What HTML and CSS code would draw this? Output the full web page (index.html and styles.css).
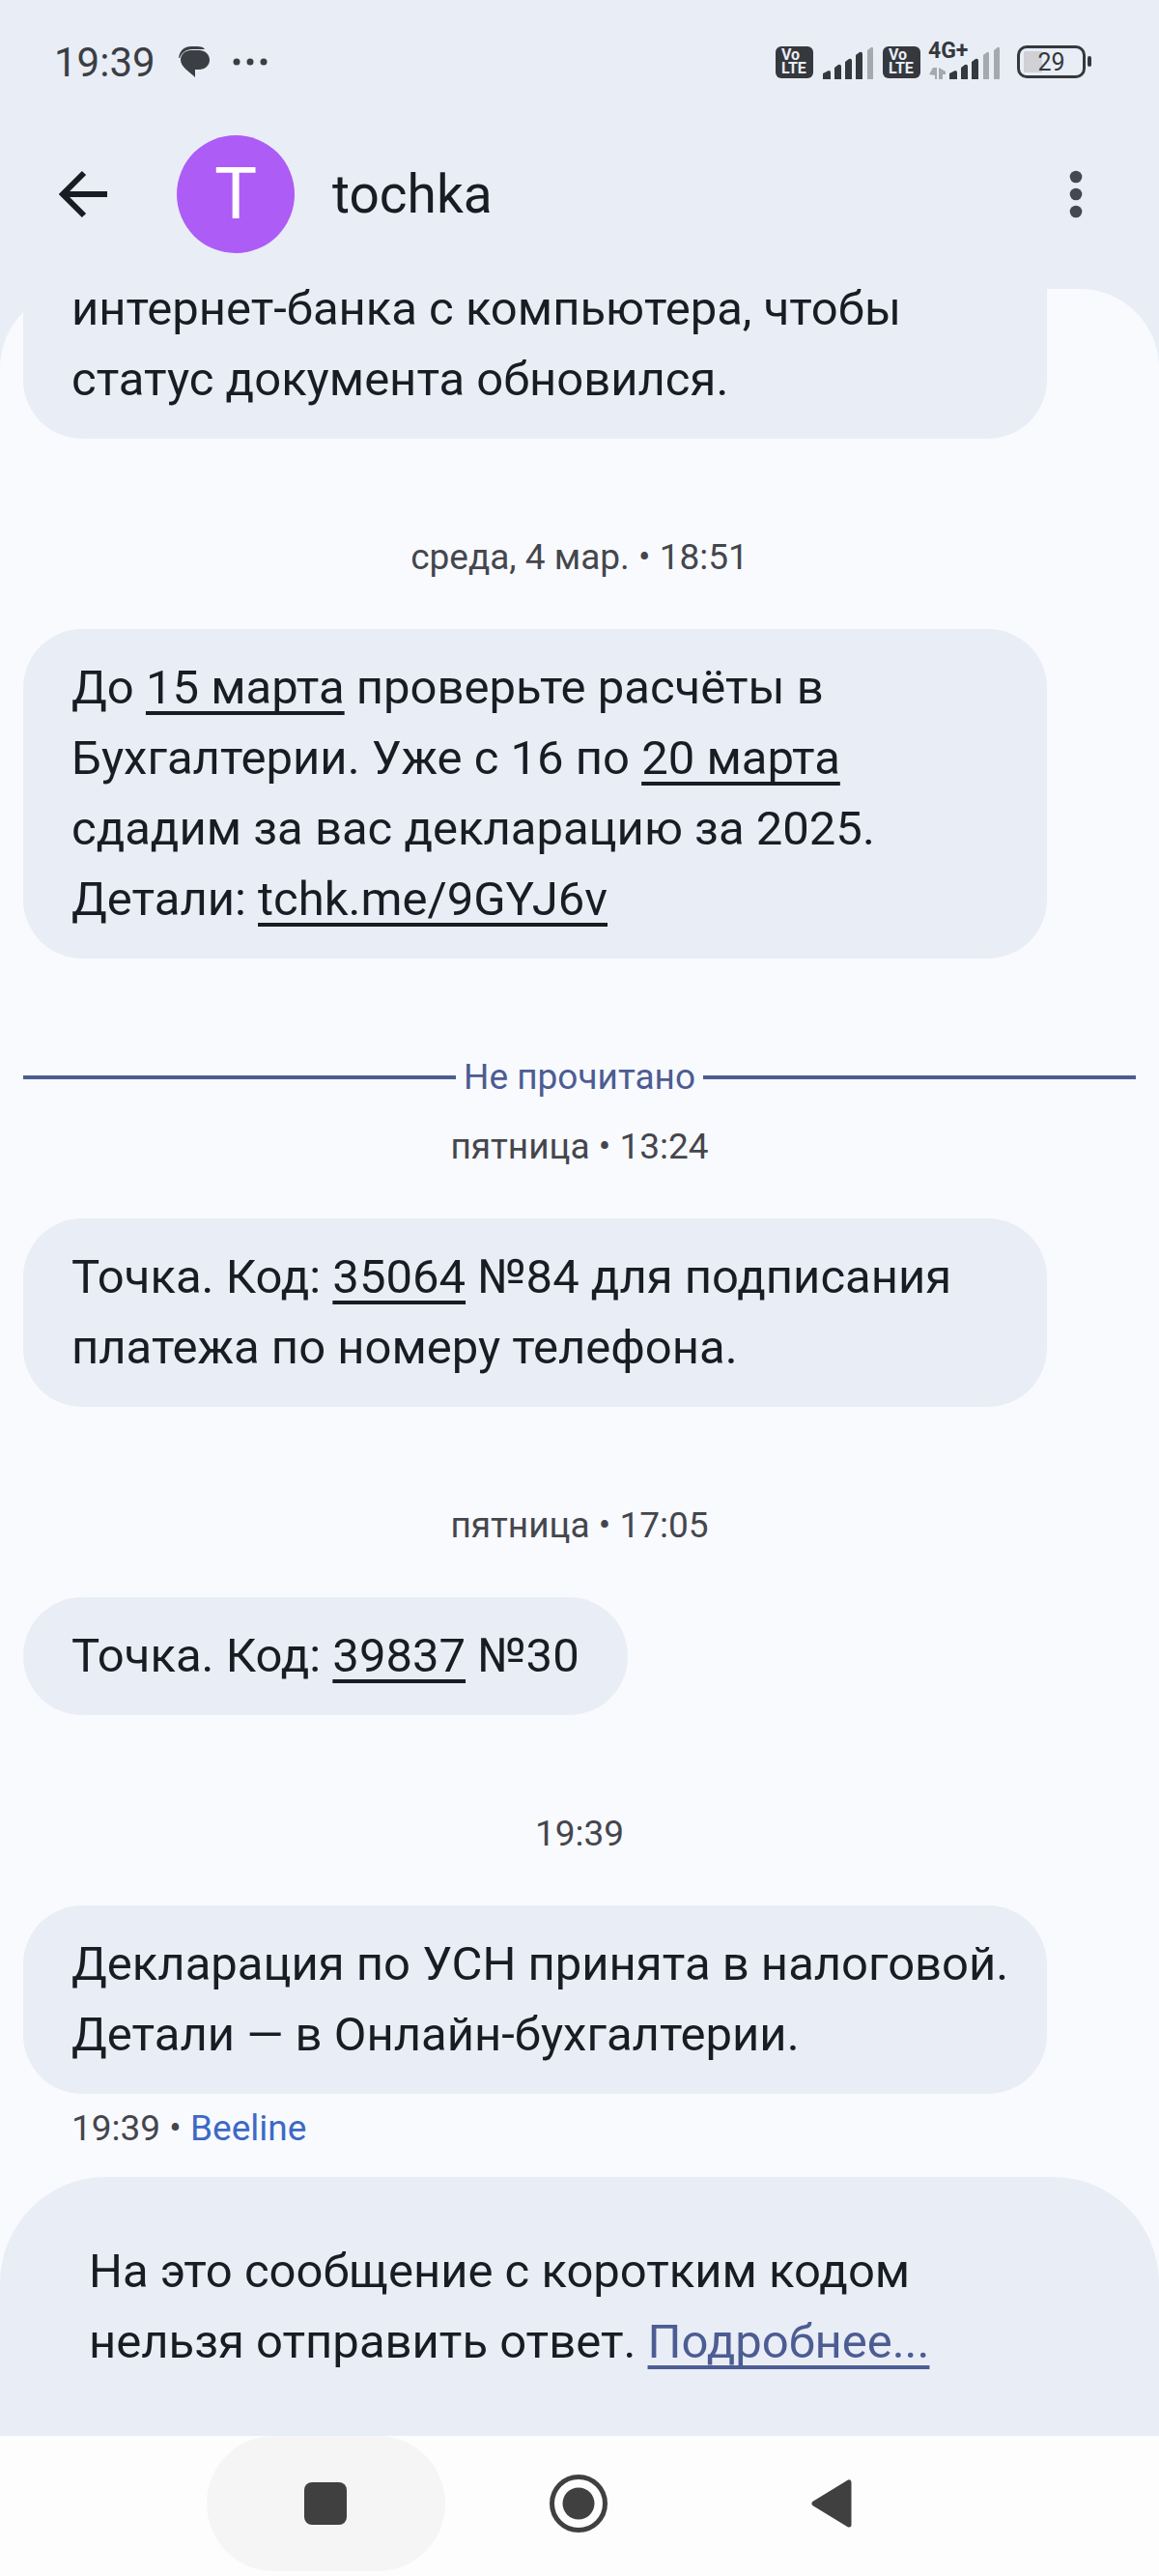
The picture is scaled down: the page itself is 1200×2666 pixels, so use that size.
FILE: index.html
```html
<!DOCTYPE html>
<html lang="ru">
<head>
  <meta charset="UTF-8" />
  <meta name="viewport" content="width=device-width, initial-scale=1.0" />
  <title>tochka</title>
  <link rel="stylesheet" href="styles.css">
</head>
<body>
  <div class="status-bar">
    <div class="status-left">
      <span class="clock">19:39</span>
      <svg class="notice" width="32" height="32" viewBox="0 0 32 32">
        <path d="M0 12C1 4 6 0 13 0h6c4 0 7 1 8 3H14C7 3 3 7 1 12z" fill="#3b3e43" />
        <path d="M13 4h8c6 0 11 4 11 10s-5 10-11 10h-4v8C11 26 2 21 2 14 2 8 7 4 13 4z" fill="#3b3e43" />
      </svg>
      <svg width="36" height="8" viewBox="0 0 36 8" fill="#3b3e43">
        <circle cx="4" cy="4" r="3.5" /><circle cx="18" cy="4" r="3.5" /><circle cx="32" cy="4" r="3.5" />
      </svg>
    </div>
    <div class="status-right">
      <span class="volte">Vo<br>LTE</span>
      <svg width="54" height="36" viewBox="0 0 54 36" fill="#35383d">
        <path d="M1 30l6-3q2 0 2 2v7H1zM13 24l4-3q3-1 3 2v13h-7zM24 18l4-3q3-1 3 2v19h-7zM35 11l4-3q3-1 3 2v26h-7z" />
        <path d="M47 6l4-3q2-1 2 2v31h-6z" fill="#a5a8ae" />
      </svg>
      <span class="volte">Vo<br>LTE</span>
      <div class="mobile">
        <span class="net-type">4G+</span>
        <svg width="76" height="36" viewBox="0 0 76 36" fill="#35383d">
          <path d="M4 24h4v12H6v-4l-6-1zM10 24l7 4v3h-3v5h-4z" fill="#a5a8ae" />
          <path d="M21 30l6-3q2 0 2 2v7h-8zM33 24l4-3q3-1 3 2v13h-7zM44 18l4-3q3-1 3 2v19h-7z" />
          <path d="M56 11l4-3q2-1 2 2v26h-6zM67 6l4-3q2-1 2 2v31h-6z" fill="#a5a8ae" />
        </svg>
      </div>
      <span class="battery">29</span>
    </div>
  </div>

  <header class="header">
    <button class="icon-button" aria-label="Назад">
      <svg width="50" height="50" viewBox="0 0 50 50" fill="none" stroke="#191c22" stroke-width="6">
        <path d="M26 3L4 25l22 22M5 25h45" />
      </svg>
    </button>
    <div class="avatar">T</div>
    <h1>tochka</h1>
    <button class="icon-button menu" aria-label="Ещё">
      <svg width="14" height="50" viewBox="0 0 14 50" fill="#454851">
        <circle cx="7" cy="7" r="6.3" /><circle cx="7" cy="25" r="6.3" /><circle cx="7" cy="43" r="6.3" />
      </svg>
    </button>
  </header>

  <main class="chat">
    <div class="bubble wide scrolled">интернет-банка с компьютера, чтобы<br>статус документа обновился.</div>

    <div class="date">среда, 4 мар. • 18:51</div>
    <div class="bubble wide">До <a href="#">15 марта</a> проверьте расчёты в<br>Бухгалтерии. Уже с 16 по <a href="#">20 марта</a><br>сдадим за вас декларацию за 2025.<br>Детали: <a href="#">tchk.me/9GYJ6v</a></div>

    <div class="unread">Не прочитано</div>
    <div class="date after-unread">пятница • 13:24</div>
    <div class="bubble wide">Точка. Код: <a href="#">35064</a> №84 для подписания<br>платежа по номеру телефона.</div>

    <div class="date">пятница • 17:05</div>
    <div class="bubble">Точка. Код: <a href="#">39837</a> №30</div>

    <div class="date">19:39</div>
    <div class="bubble wide">Декларация по УСН принята в налоговой.<br>Детали — в Онлайн-бухгалтерии.</div>
    <div class="meta">19:39 • <span class="sim">Beeline</span></div>
  </main>

  <footer class="footer">
    <div class="notice-bar">
      На это сообщение с коротким кодом<br>нельзя отправить ответ. <a href="#">Подробнее...</a>
    </div>
  </footer>

  <nav class="nav">
    <button class="pressed" aria-label="Недавние">
      <svg width="44" height="44" viewBox="0 0 44 44"><rect width="44" height="44" rx="8" fill="#404040" /></svg>
    </button>
    <button aria-label="Домой">
      <svg width="60" height="60" viewBox="0 0 60 60">
        <circle cx="30" cy="30" r="27.5" fill="none" stroke="#404040" stroke-width="5" />
        <circle cx="30" cy="30" r="16.5" fill="#404040" />
      </svg>
    </button>
    <button aria-label="Назад">
      <svg width="42" height="50" viewBox="0 0 42 50">
        <path d="M3 25L39 3v44z" fill="#404040" stroke="#404040" stroke-width="5" stroke-linejoin="round" />
      </svg>
    </button>
  </nav>
</body>
</html>
```
FILE: styles.css
```css
* {
  box-sizing: border-box;
}

body {
  margin: 0;
  height: 100vh;
  display: flex;
  flex-direction: column;
  font-family: Roboto, "Noto Sans", sans-serif;
  font-size: 49px;
  line-height: 73px;
  color: #191c22;
  background: #e9edf6;
}

button {
  padding: 0;
  border: none;
  background: none;
  cursor: pointer;
}

svg {
  display: block;
}

a {
  color: inherit;
  text-decoration: underline;
  text-decoration-thickness: 4px;
  text-underline-offset: 8px;
  text-decoration-skip-ink: none;
}

/* status bar */
.status-bar {
  display: flex;
  justify-content: space-between;
  align-items: center;
  height: 128px;
  padding: 0 70px 0 56px;
}

.status-left,
.status-right {
  display: flex;
  align-items: center;
}

.clock {
  font-size: 42px;
  color: #3b3e43;
}

.notice {
  margin: 0 24px;
}

.status-right {
  gap: 9px;
}

.volte {
  width: 39px;
  height: 33px;
  padding: 2px 0 0 6px;
  border-radius: 6px;
  background: #35383d;
  color: #e9edf6;
  font-size: 16px;
  font-weight: 700;
  line-height: 14px;
}

.mobile {
  position: relative;
}

.net-type {
  position: absolute;
  top: -4px;
  left: -1px;
  font-size: 23px;
  font-weight: 700;
  line-height: 22px;
  color: #35383d;
}

.battery {
  position: relative;
  width: 71px;
  height: 34px;
  margin: 0 6px;
  border: 3px solid #35383d;
  border-radius: 10px;
  background: linear-gradient(to right, #cfd1d7 19px, transparent 19px) 4px 3px / 56px 22px no-repeat;
  color: #35383d;
  font-size: 25px;
  line-height: 29px;
  text-align: center;
}

.battery::after {
  content: "";
  position: absolute;
  top: 8px;
  right: -9px;
  width: 4px;
  height: 11px;
  border-radius: 2px;
  background: #35383d;
}

/* header */
.header {
  display: flex;
  align-items: center;
  padding: 12px 79px 37px 61px;
}

.avatar {
  width: 122px;
  height: 122px;
  margin: 0 39px 0 72px;
  border-radius: 50%;
  background: #ad5cf6;
  color: #fff;
  font-size: 74px;
  line-height: 122px;
  text-align: center;
}

h1 {
  margin: 0;
  font-size: 55px;
  font-weight: 400;
}

.menu {
  margin-left: auto;
}

/* messages, the list is scrolled to the end */
.chat {
  flex: 1;
  min-height: 0;
  display: flex;
  flex-direction: column;
  justify-content: flex-end;
  align-items: flex-start;
  padding: 0 24px 25px;
  overflow: hidden;
  border-radius: 82px 82px 0 0;
  background: #f8fafe;
}

.bubble {
  flex: none;
  padding: 24px 50px 25px;
  border-radius: 61px;
  background: #e9edf6;
}

.wide {
  width: 92%;
  padding-right: 24px;
}

.scrolled {
  border-radius: 0 0 61px 61px;
}

.date {
  flex: none;
  align-self: center;
  padding: 98px 0 49px;
  font-size: 37px;
  line-height: 50px;
  color: #45464d;
}

.after-unread {
  padding-top: 22px;
}

.unread {
  flex: none;
  align-self: stretch;
  display: flex;
  align-items: center;
  gap: 8px;
  margin-top: 98px;
  font-size: 37px;
  line-height: 50px;
  color: #4d5c92;
}

.unread::before,
.unread::after {
  content: "";
  flex: 1;
  height: 4px;
  background: #4d5c92;
}

.meta {
  flex: none;
  padding: 11px 50px 0;
  font-size: 37px;
  line-height: 50px;
  color: #45464d;
}

.sim {
  color: #3d69c5;
}

/* bottom */
.footer {
  background: #f8fafe;
}

.notice-bar {
  padding: 61px 92px;
  border-radius: 110px 110px 0 0;
  background: #e9edf6;
}

.notice-bar a {
  color: #4d5c92;
}

.nav {
  display: flex;
  justify-content: center;
  gap: 15px;
  height: 145px;
  padding: 0 2px 5px 0;
  background: #fdfdfd;
}

.nav button {
  display: flex;
  align-items: center;
  justify-content: center;
  width: 247px;
  border-radius: 70px;
}

.nav .pressed {
  background: #f5f5f5;
}
```
